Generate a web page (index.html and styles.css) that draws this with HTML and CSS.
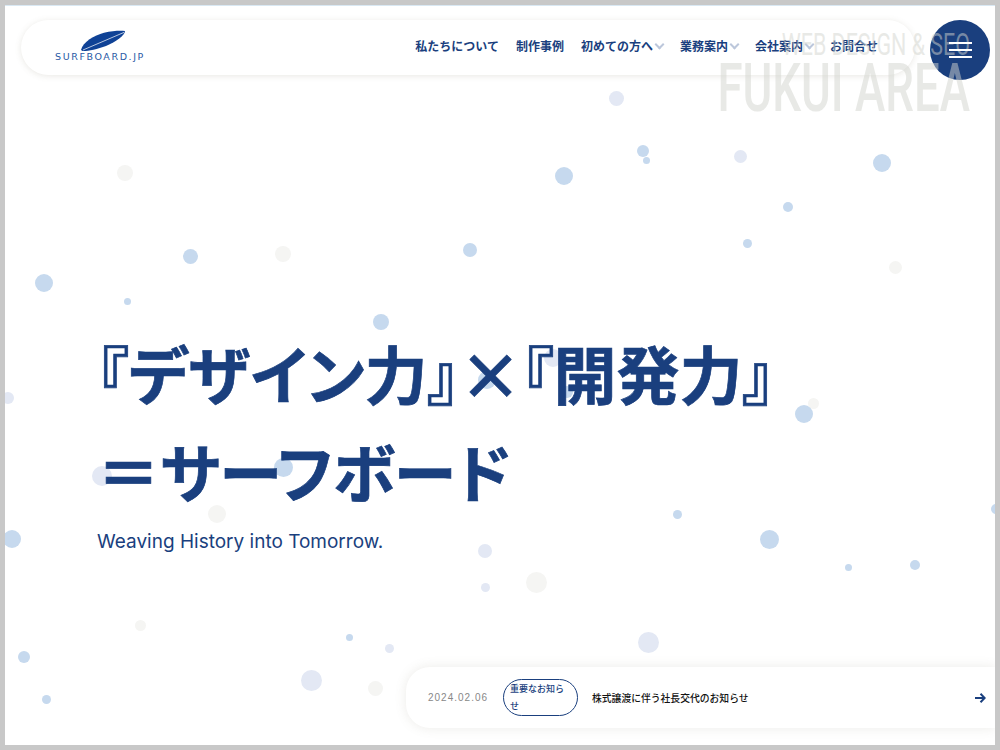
FILE: index.html
```html
<!DOCTYPE html>
<html lang="ja">
<head>
  <meta charset="UTF-8">
  <meta name="viewport" content="width=device-width, initial-scale=1.0">
  <title>SURFBOARD.JP</title>
  <link rel="stylesheet" href="styles.css">
</head>
<body>
  <div class="page">
    <div class="bubbles" id="bubbles"></div>

    <header class="site-header">
      <div class="header-pill">
        <a class="logo" href="#">
          <svg class="logo-board" width="46" height="22" viewBox="0 0 46 22">
            <path d="M1 20C3 12 14 5.5 24 2.8C33 .6 41 .4 45 1C45 5 36 12 26 16C17 19.5 6 21.5 2.5 21Z" fill="#0f4296"/>
            <path d="M3 20L44 2.4" stroke="#fff" stroke-width=".7" fill="none"/>
          </svg>
          <span class="logo-text">SURFBOARD.JP</span>
        </a>
        <nav class="global-nav">
          <a href="#">私たちについて</a>
          <a href="#">制作事例</a>
          <a class="has-sub" href="#">初めての方へ</a>
          <a class="has-sub" href="#">業務案内</a>
          <a class="has-sub" href="#">会社案内</a>
          <a href="#">お問合せ</a>
        </nav>
      </div>
      <button class="menu-btn" aria-label="メニュー"><span></span><span></span><span></span></button>
    </header>

    <section class="hero">
      <h1>『デザイン力』×『開発力』<br>＝サーフボード</h1>
      <p class="hero-sub">Weaving History into Tomorrow.</p>
    </section>

    <a class="news-bar" href="#">
      <span class="news-date">2024.02.06</span>
      <span class="news-tag">重要なお知らせ</span>
      <span class="news-title">株式譲渡に伴う社長交代のお知らせ</span>
      <svg class="news-arrow" width="12" height="12" viewBox="0 0 12 12">
        <path d="M1 6H10.5M6.5 1.8L10.7 6L6.5 10.2" stroke="#1a3f7e" stroke-width="2" fill="none"/>
      </svg>
    </a>

    <div class="area-text">
      <span class="area-small">WEB DESIGN &amp; SEO</span>
      <span class="area-big">FUKUI AREA</span>
    </div>
  </div>

  <script>
    // x, y, size, colour (page coordinates)
    const bubbleData = [
      [616, 98, 15, "p"], [643, 151, 12, "b"], [646, 160, 7, "b"], [740, 156, 13, "p"],
      [564, 176, 18, "b"], [882, 163, 18, "b"], [125, 173, 16, "g"], [788, 207, 10, "b"],
      [747, 243, 9, "b"], [190, 256, 15, "b"], [283, 254, 16, "g"], [470, 250, 14, "b"],
      [895, 267, 13, "g"], [44, 283, 18, "b"], [127, 301, 7, "b"], [381, 322, 16, "b"],
      [8, 398, 12, "p"], [813, 403, 11, "g"], [804, 414, 18, "b"], [487, 380, 18, "b"],
      [553, 358, 18, "p"], [567, 392, 12, "b"], [102, 476, 20, "p"], [283, 467, 19, "b"],
      [217, 514, 18, "g"], [996, 509, 10, "b"], [677, 514, 9, "b"], [12, 539, 18, "b"],
      [485, 551, 14, "p"], [769, 539, 19, "b"], [848, 567, 7, "b"], [915, 565, 10, "b"],
      [536, 582, 21, "g"], [485, 587, 9, "p"], [140, 625, 11, "g"], [349, 637, 7, "b"],
      [389, 648, 9, "p"], [648, 642, 21, "p"], [24, 657, 12, "b"], [311, 680, 21, "p"],
      [375, 688, 15, "g"], [46, 699, 9, "b"]
    ];

    const bubbles = document.getElementById("bubbles");

    bubbleData.forEach(([x, y, size, colour]) => {
      const bubble = document.createElement("span");
      bubble.className = "bubble bubble-" + colour;
      bubble.style.left = (x - size / 2) + "px";
      bubble.style.top = (y - size / 2) + "px";
      bubble.style.width = size + "px";
      bubble.style.height = size + "px";
      bubbles.appendChild(bubble);
    });
  </script>
</body>
</html>
```

FILE: styles.css
```css
* {
  box-sizing: border-box;
}

body {
  margin: 0;
  background-color: #fff;
  font-family: "Noto Sans CJK JP", "Noto Sans", sans-serif;
  color: #1a3f7e;
}

a {
  color: inherit;
  text-decoration: none;
}

.page {
  position: relative;
  width: 1000px;
  height: 750px;
  border: 5px solid #c8c8c8;
  overflow: hidden;
  display: flex;
  flex-direction: column;
  background-color: #fff;
}

.page::before {
  content: "";
  position: absolute;
  top: 0;
  left: 0;
  right: 0;
  height: 1px;
  background-color: #d9e8f3;
}

/* 背景の水玉 */
.bubbles {
  position: absolute;
  top: -5px;
  left: -5px;
}

.bubble {
  position: absolute;
  border-radius: 50%;
}

.bubble-b {
  background-color: #c6d9ee;
}

.bubble-p {
  background-color: #e3e8f4;
}

.bubble-g {
  background-color: #f5f5f3;
}

/* ヘッダー */
.site-header {
  position: relative;
  display: flex;
  align-items: flex-start;
  gap: 15px;
  padding: 15px 5px 0 16px;
}

.header-pill {
  flex: 1;
  height: 55px;
  display: flex;
  align-items: center;
  justify-content: space-between;
  padding: 0 37px 0 34px;
  background-color: #fff;
  border-radius: 28px;
  box-shadow: 0 1px 6px rgba(120, 110, 90, 0.16);
}

.logo {
  display: flex;
  flex-direction: column;
  align-items: center;
  width: 90px;
  padding-bottom: 7px;
}

.logo-board {
  display: block;
  margin: 2px 0 0 5px;
}

.logo-text {
  font-family: "DejaVu Sans", sans-serif;
  font-size: 9.5px;
  line-height: 9px;
  letter-spacing: 1.6px;
  color: #2a5aa5;
  white-space: nowrap;
}

.global-nav {
  display: flex;
  align-items: center;
  gap: 17px;
  padding-bottom: 4px;
  font-size: 12px;
  font-weight: 700;
  white-space: nowrap;
}

.has-sub {
  display: flex;
  align-items: center;
  gap: 3px;
}

.has-sub::after {
  content: "";
  width: 5px;
  height: 5px;
  margin-top: -3px;
  border-right: 2px solid #bcc7db;
  border-bottom: 2px solid #bcc7db;
  transform: rotate(45deg);
}

.menu-btn {
  flex: none;
  width: 60px;
  height: 60px;
  padding: 0;
  border: none;
  border-radius: 50%;
  background-color: #1a3f7e;
  display: flex;
  flex-direction: column;
  align-items: center;
  justify-content: center;
  gap: 5.5px;
}

.menu-btn span {
  position: relative;
  z-index: 3;
  width: 23px;
  height: 1.5px;
  background-color: #fff;
}

/* メインコピー */
.hero {
  position: relative;
  padding: 243px 0 0 92px;
}

.hero h1 {
  margin: 0;
  font-size: 63px;
  font-weight: 700;
  line-height: 98px;
  font-feature-settings: "palt";
  -webkit-text-stroke: 0.7px #1a3f7e;
  white-space: nowrap;
}

.hero-sub {
  margin: 10px 0 0;
  font-family: "Inter", sans-serif;
  font-size: 19px;
  line-height: 26px;
}

/* お知らせ */
.news-bar {
  position: absolute;
  left: 401px;
  right: 0;
  top: 662px;
  height: 61px;
  display: flex;
  align-items: center;
  padding: 0 9px 0 22px;
  background-color: #fff;
  border-radius: 24px 0 0 24px;
  box-shadow: 0 0 12px rgba(120, 110, 90, 0.14);
}

.news-date {
  width: 75px;
  font-family: "Liberation Sans", sans-serif;
  font-size: 10px;
  letter-spacing: 1px;
  color: #888;
}

.news-tag {
  width: 75px;
  height: 37px;
  margin-right: 14px;
  padding: 0 6px;
  border: 1px solid #1a3f7e;
  border-radius: 19px;
  font-size: 9px;
  line-height: 17px;
  font-weight: 500;
}

.news-title {
  flex: 1;
  font-size: 9.8px;
  font-weight: 500;
  color: #111;
}

/* 右上の透かし文字 */
.area-text {
  position: absolute;
  top: 22px;
  right: 25px;
  z-index: 2;
  display: flex;
  flex-direction: column;
  align-items: flex-end;
  font-family: "Roboto", "Liberation Sans", sans-serif;
  color: rgba(210, 212, 205, 0.5);
  pointer-events: none;
  white-space: nowrap;
}

.area-small {
  font-size: 32px;
  line-height: 34px;
  transform: scaleX(0.67);
  transform-origin: right center;
}

.area-big {
  font-size: 66px;
  line-height: 56px;
  font-weight: 500;
  transform: scaleX(0.69);
  transform-origin: right center;
}
```
